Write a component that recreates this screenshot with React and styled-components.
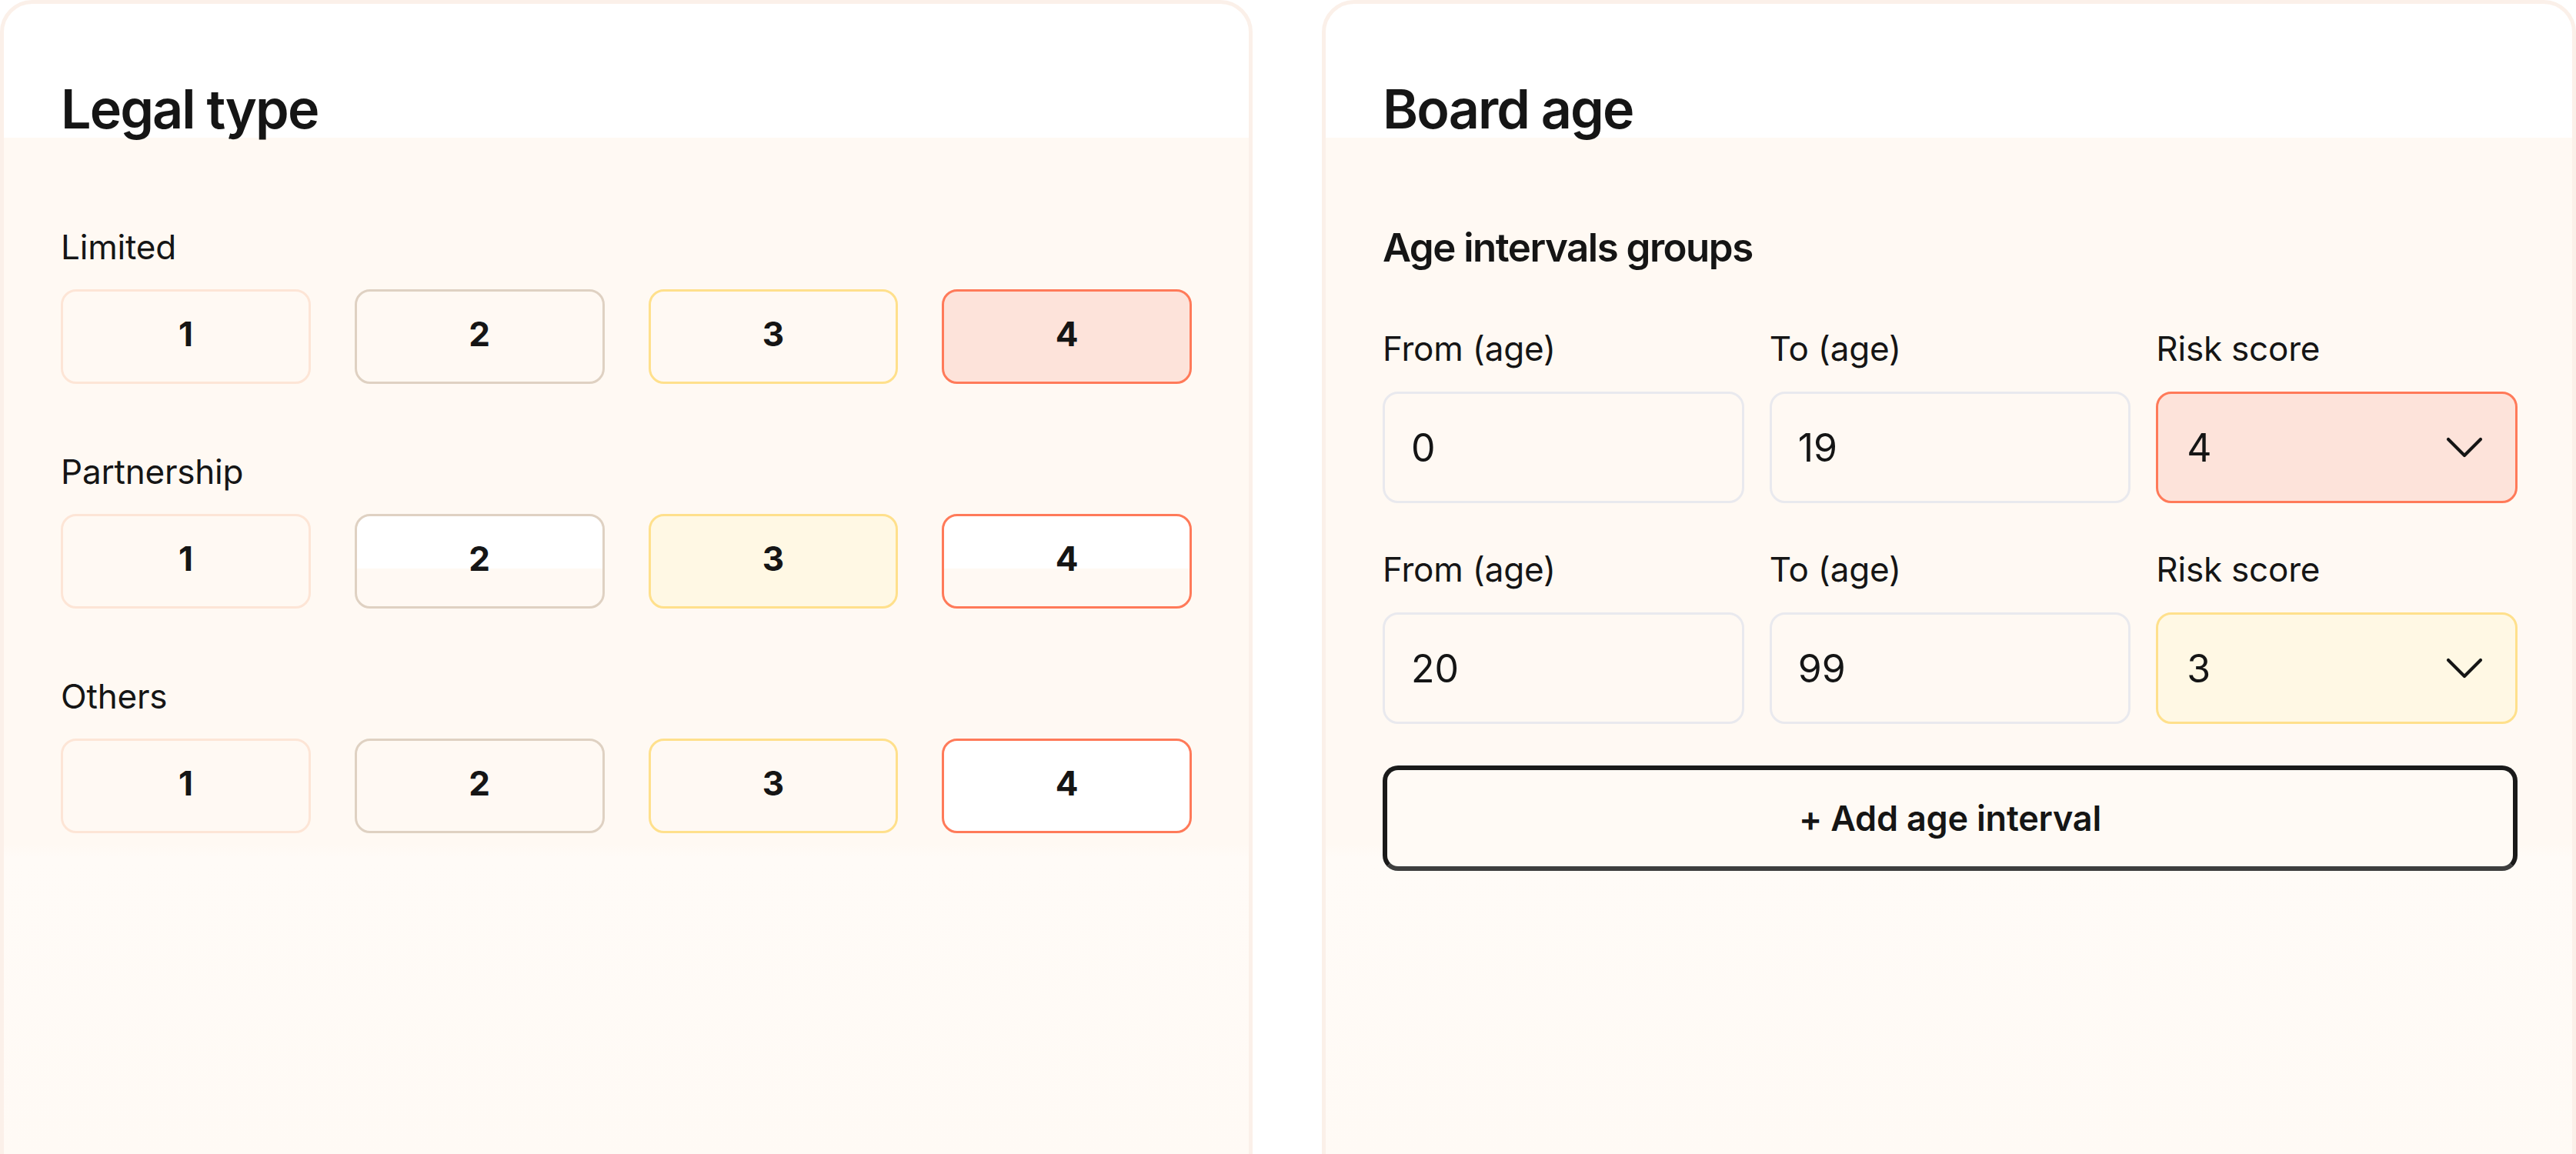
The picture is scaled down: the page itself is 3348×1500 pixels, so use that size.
import React from 'react'
import styled, { createGlobalStyle } from 'styled-components'

const GlobalStyle = createGlobalStyle`
  html, body {
    margin: 0;
    padding: 0;
    background: #ffffff;
  }
  body {
    font-family: Inter, "Noto Sans", "Liberation Sans", sans-serif;
    color: #151515;
  }
  * { box-sizing: border-box; }
`

const tones = {
  1: { border: '#FDE5D6', fill: '#FFF9F3' },
  2: { border: '#DFD1C2', fill: '#FFF9F3' },
  3: { border: '#FFE08C', fill: '#FFF8E4' },
  4: { border: '#FF7A59', fill: '#FDE3DA' },
}

const legalTypes = [
  { name: 'Limited', selected: 4, washed: {} },
  { name: 'Partnership', selected: 3, washed: { 2: 'half', 4: 'half' } },
  { name: 'Others', selected: null, washed: { 4: 'full' } },
]

const intervals = [
  { from: '0', to: '19', score: 4 },
  { from: '20', to: '99', score: 3 },
]

export default function App() {
  return (
    <>
      <GlobalStyle />
      <Page>
        <Card>
          <Title>Legal type</Title>
          <Groups>
            {legalTypes.map((type) => (
              <Group key={type.name}>
                <Label>{type.name}</Label>
                <ScoreRow>
                  {[1, 2, 3, 4].map((n) => (
                    <ScoreButton
                      key={n}
                      $tone={n}
                      $active={type.selected === n}
                      $wash={type.washed[n]}
                    >
                      {n}
                    </ScoreButton>
                  ))}
                </ScoreRow>
              </Group>
            ))}
          </Groups>
        </Card>

        <Card $right>
          <Title>Board age</Title>
          <Subtitle>Age intervals groups</Subtitle>
          <Intervals>
            {intervals.map((row, i) => (
              <IntervalRow key={i}>
                <Field>
                  <Label>From (age)</Label>
                  <Input>{row.from}</Input>
                </Field>
                <Field>
                  <Label>To (age)</Label>
                  <Input>{row.to}</Input>
                </Field>
                <Field>
                  <Label>Risk score</Label>
                  <Select $tone={row.score}>
                    <span>{row.score}</span>
                    <Chevron viewBox="0 0 48 27" fill="none">
                      <path d="M3 3 L24 24 L45 3" stroke="#151515" strokeWidth="4.2" strokeLinecap="round" strokeLinejoin="round" />
                    </Chevron>
                  </Select>
                </Field>
              </IntervalRow>
            ))}
          </Intervals>
          <AddButton>+ Add age interval</AddButton>
        </Card>
      </Page>
    </>
  )
}

const Page = styled.div`
  display: grid;
  grid-template-columns: 1628px 1630px;
  column-gap: 90px;
  height: 1500px;
  overflow: hidden;
`

const Card = styled.section`
  height: 1620px;
  border: 5px solid #FBF0E9;
  border-radius: 42px 42px 0 0;
  padding: 95px ${(p) => (p.$right ? '71px' : '74px')} 0 74px;
  background:
    linear-gradient(
      to bottom,
      #ffffff 0,
      #ffffff 174px,
      #FFF9F3 174px,
      #FFF9F3 1092px,
      #FFFBF7 1110px,
      #FFFAF5 1500px
    );
`

const Title = styled.h2`
  margin: 0;
  font-size: 70px;
  line-height: 84px;
  font-weight: 600;
  letter-spacing: -1.9px;
`

const Subtitle = styled.h3`
  margin: 107px 0 0 0;
  font-size: 51px;
  line-height: 62px;
  font-weight: 600;
  letter-spacing: -1.5px;
`

const Groups = styled.div`
  display: flex;
  flex-direction: column;
  gap: 88px;
  margin-top: 111px;
`

const Group = styled.div`
  display: flex;
  flex-direction: column;
  gap: 28px;
`

const Label = styled.div`
  font-size: 44px;
  line-height: 53px;
  font-weight: 400;
  letter-spacing: -0.2px;
`

const ScoreRow = styled.div`
  display: grid;
  grid-template-columns: repeat(4, 1fr);
  column-gap: 57px;
`

const ScoreButton = styled.button`
  height: 123px;
  border: 3px solid ${(p) => tones[p.$tone].border};
  border-radius: 20px;
  background: ${(p) =>
    p.$active
      ? tones[p.$tone].fill
      : p.$wash === 'full'
      ? '#ffffff'
      : p.$wash === 'half'
      ? 'linear-gradient(to bottom, #ffffff 0, #ffffff 58%, #FFF9F3 58%)'
      : '#FFF9F3'};
  font-family: inherit;
  font-size: 44px;
  font-weight: 700;
  color: #151515;
  display: flex;
  align-items: center;
  justify-content: center;
  padding: 0 0 7px 0;
`

const Intervals = styled.div`
  display: flex;
  flex-direction: column;
  gap: 60px;
  margin-top: 74px;
`

const IntervalRow = styled.div`
  display: grid;
  grid-template-columns: repeat(3, 1fr);
  column-gap: 33px;
`

const Field = styled.div`
  display: flex;
  flex-direction: column;
  gap: 29px;
`

const Input = styled.div`
  height: 145px;
  border: 3px solid #E9E9EE;
  border-radius: 20px;
  background: #FFF9F3;
  display: flex;
  align-items: center;
  padding: 0 34px;
  font-size: 50px;
  font-weight: 400;
  color: #151515;
`

const Select = styled(Input)`
  justify-content: space-between;
  padding: 0 42px 0 37px;
  border-color: ${(p) => tones[p.$tone].border};
  background: ${(p) => tones[p.$tone].fill};
`

const Chevron = styled.svg`
  width: 48px;
  height: 27px;
  flex-shrink: 0;
`

const AddButton = styled.button`
  display: flex;
  align-items: center;
  justify-content: center;
  width: 100%;
  height: 137px;
  margin-top: 54px;
  border: 6px solid #1A1A1A;
  border-bottom-color: #3E3E3E;
  border-radius: 20px;
  background: #FFFAF5;
  font-family: inherit;
  font-size: 45px;
  font-weight: 600;
  color: #151515;
  letter-spacing: -0.2px;
`
